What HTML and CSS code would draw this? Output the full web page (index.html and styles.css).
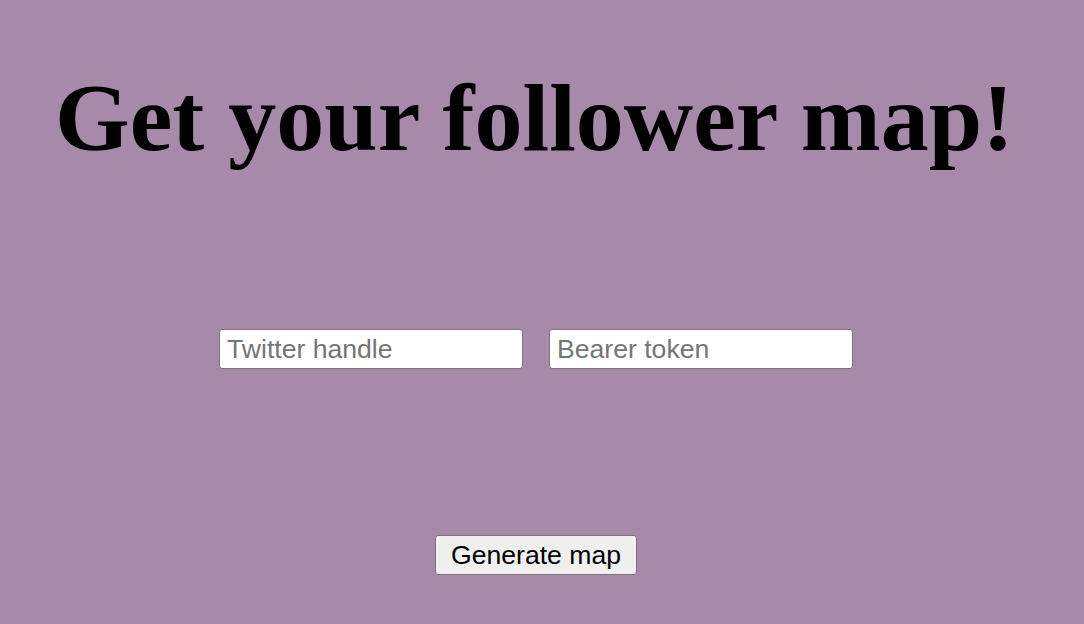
FILE: index.html
```html
<!DOCTYPE html>
<html>
<head>
<meta charset="utf-8">
<title>Follower map</title>
<link rel="stylesheet" href="styles.css">
</head>
<body>
<main class="page">
  <h1 class="title">Get your follower map!</h1>
  <form class="form">
    <div class="fields">
      <input class="field" type="text" placeholder="Twitter handle">
      <input class="field" type="text" placeholder="Bearer token">
    </div>
    <button class="btn" type="button">Generate map</button>
  </form>
</main>
</body>
</html>
```

FILE: styles.css
```css
html, body {
  margin: 0;
  padding: 0;
  background: #a78aa9;
}
body {
  min-height: 624px;
}
.page {
  display: flex;
  flex-direction: column;
  align-items: center;
  padding: 0 20px 0 8px;
}
.title {
  font-family: "Liberation Serif", "Times New Roman", serif;
  font-weight: bold;
  font-size: 96px;
  line-height: 110px;
  margin: 63px 0 0 0;
  padding-right: 3px;
  color: #000;
  text-align: center;
}
.form {
  display: flex;
  flex-direction: column;
  align-items: center;
  margin-top: 156px;
  gap: 166px;
}
.fields {
  display: flex;
  gap: 26px;
}
.field {
  box-sizing: border-box;
  width: 304px;
  height: 40px;
  border: 1px solid #767676;
  border-radius: 3px;
  background: #fff;
  font-family: "Liberation Sans", Arial, sans-serif;
  font-size: 26.6px;
  padding: 0 7px;
  margin: 0;
  color: #000;
}
.field::placeholder {
  color: #757575;
}
.btn {
  box-sizing: border-box;
  width: 202px;
  height: 40px;
  border: 1px solid #767676;
  border-radius: 3px;
  background: #efefef;
  font-family: "Liberation Sans", Arial, sans-serif;
  font-size: 26.6px;
  color: #000;
  padding: 0;
  margin: 0;
}
```
